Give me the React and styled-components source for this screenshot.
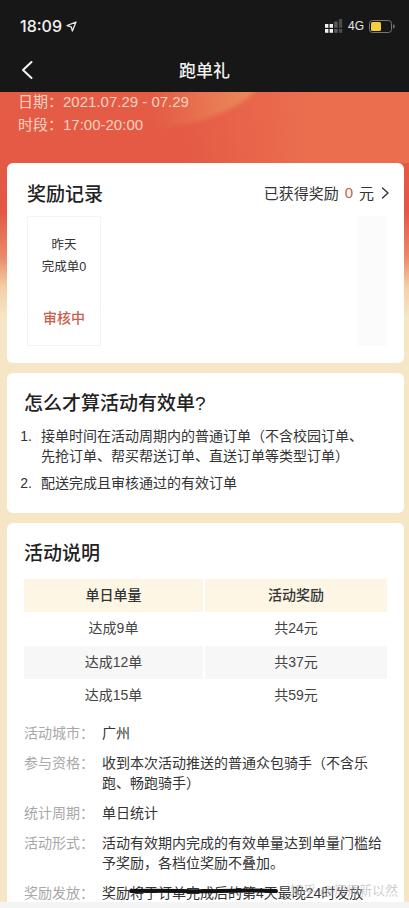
import styled, { createGlobalStyle } from "styled-components"

const rewards = [
  { count: "达成9单", money: "共24元" },
  { count: "达成12单", money: "共37元" },
  { count: "达成15单", money: "共59元" },
]

const details = [
  { label: "活动城市：", text: "广州" },
  { label: "参与资格：", text: "收到本次活动推送的普通众包骑手（不含乐跑、畅跑骑手）" },
  { label: "统计周期：", text: "单日统计" },
  { label: "活动形式：", text: "活动有效期内完成的有效单量达到单量门槛给予奖励，各档位奖励不叠加。" },
  { label: "奖励发放：", text: "奖励将于订单完成后的第4天最晚24时发放" },
]

export default function App() {
  return (
    <Pagina>
      <Global />
      <StatusBar>
        <Hora>
          18:09
          <svg width="11" height="11" viewBox="0 0 11 11" fill="none" stroke="#e8e8e8" strokeWidth="1.3" strokeLinejoin="round">
            <path d="M10 1 1 4.6l4.2 1.2L6.4 10z" />
          </svg>
        </Hora>
        <StatusDireita>
          <svg width="18" height="14" viewBox="0 0 18 14">
            <rect x="0" y="5" width="3.4" height="3.8" fill="#f2f2f2" />
            <rect x="0" y="10" width="3.4" height="3.8" fill="#f2f2f2" />
            <rect x="4.6" y="5" width="3.4" height="3.8" fill="#f2f2f2" />
            <rect x="4.6" y="10" width="3.4" height="3.8" fill="#f2f2f2" />
            <rect x="9.2" y="2.500" width="3.4" height="6.3" fill="#5c5c5c" />
            <rect x="9.2" y="10" width="3.4" height="3.8" fill="#5c5c5c" />
            <rect x="13.8" y="0" width="3.4" height="8.8" fill="#4c4c4c" />
            <rect x="13.8" y="10" width="3.4" height="3.8" fill="#4c4c4c" />
          </svg>
          <Rede>4G</Rede>
          <svg width="26" height="13" viewBox="0 0 26 13">
            <rect x="0.5" y="0.5" width="22" height="12" rx="3" fill="none" stroke="#777" />
            <rect x="2" y="2" width="10" height="9" rx="1.5" fill="#f4d03f" />
            <rect x="24" y="4.5" width="1.5" height="4" rx="0.7" fill="#777" />
          </svg>
        </StatusDireita>
      </StatusBar>
      <NavBar>
        <Voltar>
          <svg width="14" height="20" viewBox="0 0 14 20" fill="none" stroke="#f4f4f4" strokeWidth="2" strokeLinecap="round" strokeLinejoin="round">
            <path d="M11.5 2 3 10l8.500 8" />
          </svg>
        </Voltar>
        <Titulo>跑单礼</Titulo>
      </NavBar>

      <Fundo>
        <Hero>
          <HeroLinha>日期：2021.07.29 - 07.29</HeroLinha>
          <HeroLinha>时段：17:00-20:00</HeroLinha>
        </Hero>

        <Cartao $altura="200px">
          <CabecalhoRegistro>
            <TituloRegistro>奖励记录</TituloRegistro>
            <Obtido>
              已获得奖励<Zero>0</Zero>元
              <svg width="9" height="14" viewBox="0 0 9 14" fill="none" stroke="#333" strokeWidth="1.4" strokeLinecap="round" strokeLinejoin="round">
                <path d="M1.500 2 7 7l-5.500 5" />
              </svg>
            </Obtido>
          </CabecalhoRegistro>
          <LinhaDias>
            <CartaoDia>
              <TextoDia>昨天</TextoDia>
              <TextoDia>完成单0</TextoDia>
              <Estado>审核中</Estado>
            </CartaoDia>
            <Sombra />
          </LinhaDias>
        </Cartao>

        <Cartao $altura="140px">
          <TituloSecao>怎么才算活动有效单?</TituloSecao>
          <Lista>
            <ItemLista><Numero>1.</Numero><span>接单时间在活动周期内的普通订单（不含校园订单、先抢订单、帮买帮送订单、直送订单等类型订单）</span></ItemLista>
            <ItemLista><Numero>2.</Numero><span>配送完成且审核通过的有效订单</span></ItemLista>
          </Lista>
        </Cartao>

        <Cartao>
          <TituloSecao>活动说明</TituloSecao>
          <Tabela>
            <CelulaTopo>单日单量</CelulaTopo>
            <CelulaTopo>活动奖励</CelulaTopo>
            {rewards.map((r, i) => [
              <Celula key={r.count} $cinza={i === 1}>{r.count}</Celula>,
              <Celula key={r.money} $cinza={i === 1}>{r.money}</Celula>,
            ])}
          </Tabela>
          <Detalhes>
            {details.map((d) => (
              <LinhaDetalhe key={d.label}>
                <Rotulo>{d.label}</Rotulo>
                <span>{d.text}</span>
              </LinhaDetalhe>
            ))}
          </Detalhes>
          <Risco width="150" height="8" viewBox="0 0 150 8">
            <path d="M2 4 C40 3 60 5 90 4 S130 3 147 4" fill="none" stroke="#111" strokeWidth="4" strokeLinecap="round" />
          </Risco>
          <MarcaDagua>知乎 @师师新以然</MarcaDagua>
        </Cartao>
      </Fundo>
      <Rodape />
    </Pagina>
  )
}

const Global = createGlobalStyle`
    html, body {
        margin: 0;
        padding: 0;
        background-color: #f5ebd2;
    }
    * {
        box-sizing: border-box;
    }
`
const Pagina = styled.div`
    position: relative;
    width: 409px;
    height: 908px;
    overflow: hidden;
    font-family: "Liberation Sans", "Noto Sans CJK SC", sans-serif;
    color: #333333;
`
const StatusBar = styled.div`
    height: 46px;
    padding: 6px 14px 0 20px;
    display: flex;
    justify-content: space-between;
    align-items: center;
    background-color: #171717;
`
const Hora = styled.div`
    display: flex;
    align-items: center;
    gap: 4px;
    font-family: "Inter", sans-serif;
    font-size: 16px;
    font-weight: 500;
    color: #f2f2f2;
`
const StatusDireita = styled.div`
    display: flex;
    align-items: center;
    gap: 5px;
`
const Rede = styled.span`
    font-size: 12px;
    color: #e6e6e6;
`
const NavBar = styled.div`
    position: relative;
    height: 46px;
    display: flex;
    align-items: center;
    justify-content: center;
    background-color: #171717;
`
const Voltar = styled.div`
    position: absolute;
    left: 20px;
    top: 14px;
    line-height: 0;
`
const Titulo = styled.h1`
    margin: 0;
    font-size: 17px;
    font-weight: 500;
    color: #f2f2f2;
`
const Fundo = styled.div`
    height: 810px;
    padding: 0 5px 0 7px;
    background: linear-gradient(180deg, #e55c46 0px, #e35844 120px, #ec8a68 165px, #f3cfa6 195px, #f6e6c6 225px);
`
const Hero = styled.div`
    position: relative;
    height: 71px;
    margin: 0 -5px 0 -7px;
    padding: 0 0 0 18px;
    overflow: hidden;
    background: linear-gradient(90deg, rgba(236, 110, 78, 0) 45%, rgba(236, 112, 80, 0.9) 75%);
    &::before {
        content: "";
        position: absolute;
        left: -10px;
        top: -102px;
        width: 280px;
        height: 140px;
        border-radius: 50%;
        background: linear-gradient(90deg, rgba(236, 150, 95, 0) 58%, #ea9560 95%);
        opacity: 0.8;
        filter: blur(2px);
    }
`
const HeroLinha = styled.div`
    position: relative;
    top: -1px;
    z-index: 1;
    height: 23px;
    line-height: 22px;
    font-size: 15px;
    color: #f6d3c0;
    white-space: nowrap;
`
const Cartao = styled.section`
    position: relative;
    height: ${(props) => props.$altura || "385px"};
    margin-bottom: 10px;
    padding: 0 17px;
    border-radius: 6px;
    background-color: #ffffff;
`
const CabecalhoRegistro = styled.div`
    height: 53px;
    padding: 6px 0 0 3px;
    margin-right: -3px;
    display: flex;
    justify-content: space-between;
    align-items: center;
`
const TituloRegistro = styled.h2`
    margin: 0;
    font-size: 19px;
    font-weight: 500;
    color: #222222;
`
const Obtido = styled.div`
    display: flex;
    align-items: center;
    font-size: 15px;
    color: #333333;
    svg {
        margin-left: 7px;
    }
`
const Zero = styled.span`
    margin: 0 6px;
    color: #c9604a;
`
const LinhaDias = styled.div`
    display: flex;
    justify-content: space-between;
    padding: 0 0 0 3px;
`
const CartaoDia = styled.div`
    width: 74px;
    height: 130px;
    padding-top: 17px;
    display: flex;
    flex-direction: column;
    align-items: center;
    border: 1px solid #f3f3f3;
    border-radius: 2px;
`
const TextoDia = styled.div`
    height: 22px;
    line-height: 22px;
    font-size: 12.5px;
    color: #333333;
`
const Estado = styled.div`
    margin-top: 29px;
    font-size: 14px;
    font-weight: 500;
    color: #c9604a;
`
const Sombra = styled.div`
    width: 30px;
    height: 130px;
    background-color: #fbfbfb;
`
const TituloSecao = styled.h2`
    margin: 0;
    height: 60px;
    padding-bottom: 3px;
    display: flex;
    align-items: center;
    font-size: 19px;
    font-weight: 500;
    color: #222222;
`
const Lista = styled.ol`
    margin: -7px 0 0;
    padding: 0;
    list-style: none;
`
const ItemLista = styled.li`
    display: flex;
    margin-bottom: 7px;
    font-size: 14px;
    line-height: 20px;
    color: #333333;
    span:last-child {
        width: 325px;
    }
`
const Numero = styled.span`
    flex: 0 0 24px;
    margin-left: -7px;
    padding-right: 6px;
    text-align: center;
    font-family: "Liberation Sans", sans-serif;
`
const Tabela = styled.div`
    margin-top: -4px;
    display: grid;
    grid-template-columns: 179px 182px;
    column-gap: 2px;
`
const CelulaTopo = styled.div`
    height: 33px;
    line-height: 33px;
    text-align: center;
    font-size: 14px;
    font-weight: 500;
    color: #333333;
    background-color: #fdf6e4;
`
const Celula = styled.div`
    height: 33.500px;
    line-height: 33px;
    text-align: center;
    font-size: 14px;
    color: #444444;
    background-color: ${(props) => (props.$cinza ? "#f7f7f7" : "#ffffff")};
`
const Detalhes = styled.div`
    margin-top: 10px;
`
const LinhaDetalhe = styled.div`
    display: flex;
    margin-bottom: 10px;
    font-size: 14px;
    line-height: 20px;
    color: #333333;
`
const Rotulo = styled.span`
    flex: 0 0 78px;
    color: #a8a8a8;
    white-space: nowrap;
`
const Risco = styled.svg`
    position: absolute;
    left: 122px;
    bottom: 13px;
`
const MarcaDagua = styled.div`
    position: absolute;
    right: 6px;
    bottom: 9px;
    font-size: 13px;
    color: rgba(190, 190, 190, 0.75);
    white-space: nowrap;
`
const Rodape = styled.div`
    position: absolute;
    left: 0;
    right: 0;
    bottom: 0;
    height: 6px;
    background-color: #f4f4f4;
`
